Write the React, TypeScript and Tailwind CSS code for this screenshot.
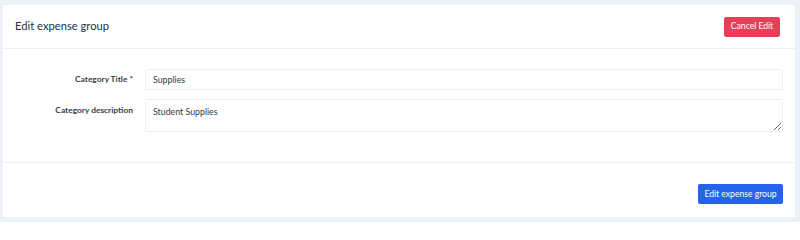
import React from "react";

export default function App() {
  return (
    <div className="w-[800px] h-[222px] bg-[#eef2f6] pt-[5px] pl-[3px] font-['Lato',sans-serif]">
      <div className="w-[792px] h-[212px] bg-white flex flex-col">
        <div className="h-[44px] flex items-center justify-between pl-[12px] pr-[15px] border-b border-[#eceff3]">
          <span className="text-[11.2px] text-[#27313f]">Edit expense group</span>
          <button className="h-[20px] w-[56px] bg-[#e3415a] text-white text-[8.6px] rounded-[2px] flex items-center justify-center">
            Cancel Edit
          </button>
        </div>
        <div className="h-[114px] border-b border-[#eceff3] pt-[20px] pr-[12px] flex flex-col gap-[9px]">
          <div className="flex items-center">
            <label className="w-[130px] text-right text-[8.4px] font-bold text-[#343e4e]">Category Title *</label>
            <div className="ml-[12px] flex-1 h-[21px] border border-[#eceff2] rounded-[2px] flex items-center px-[7px] text-[8.8px] text-[#2f3a4a]">
              Supplies
            </div>
          </div>
          <div className="flex items-start">
            <label className="w-[130px] text-right text-[8.4px] font-bold text-[#343e4e] pt-[5px]">Category description</label>
            <textarea
              className="ml-[12px] flex-1 h-[33px] border border-[#eceff2] rounded-[2px] px-[7px] pt-[5px] text-[8.8px] text-[#2f3a4a] outline-none"
              defaultValue="Student Supplies"
            />
          </div>
        </div>
        <div className="flex-1 flex justify-end pt-[21px] pr-[12px]">
          <button className="h-[20px] w-[85px] bg-[#2563eb] text-white text-[8.6px] rounded-[2px] flex items-center justify-center">
            Edit expense group
          </button>
        </div>
      </div>
    </div>
  );
}
